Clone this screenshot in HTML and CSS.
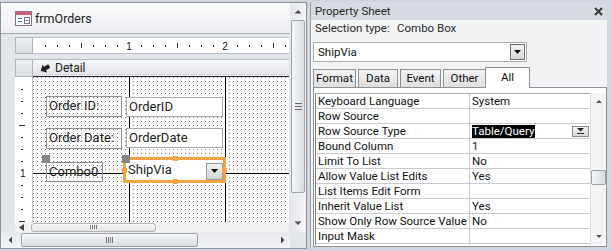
FILE: index.html
```html
<!DOCTYPE html>
<html lang="en">
<head>
    <meta charset="UTF-8">
    <meta name="viewport" content="width=device-width, initial-scale=1.0">
    <title>frmOrders - Design View</title>
    <link rel="stylesheet" href="styles.css">
</head>
<body>
<div class="screen">

    <!-- form design window -->
    <div class="designer">
        <div class="dz-main">
            <div class="dz-title">
                <svg class="form-icon" width="17" height="15" viewBox="0 0 17 15">
                    <rect x="0.5" y="0.5" width="16" height="14" fill="#fbf8f9" stroke="#8c7482"/>
                    <rect x="1" y="1" width="15" height="3" fill="#d65a7c"/>
                    <path d="M3 7.5h4M3 10.5h4" stroke="#3f6fb2" stroke-width="1.2"/>
                    <rect x="9.5" y="6.5" width="5" height="6" fill="#fff" stroke="#6f7b8d"/>
                    <path d="M10.5 9.5h3" stroke="#6f7b8d"/>
                </svg>
                <span>frmOrders</span>
            </div>

            <div class="dz-frame">
                <div class="dz-row ruler-row">
                    <div class="corner"></div>
                    <div class="hruler">
                        <svg width="256" height="15" viewBox="0 0 256 15">
                            <g fill="#333">
                                <rect x="12" y="7" width="1" height="2"/><rect x="24" y="7" width="1" height="2"/>
                                <rect x="36" y="7" width="1" height="2"/><rect x="48" y="5" width="1" height="5"/>
                                <rect x="60" y="7" width="1" height="2"/><rect x="72" y="7" width="1" height="2"/>
                                <rect x="84" y="7" width="1" height="2"/>
                                <rect x="108" y="7" width="1" height="2"/><rect x="120" y="7" width="1" height="2"/>
                                <rect x="132" y="7" width="1" height="2"/><rect x="144" y="5" width="1" height="5"/>
                                <rect x="156" y="7" width="1" height="2"/><rect x="168" y="7" width="1" height="2"/>
                                <rect x="180" y="7" width="1" height="2"/>
                                <rect x="204" y="7" width="1" height="2"/><rect x="216" y="7" width="1" height="2"/>
                                <rect x="228" y="7" width="1" height="2"/><rect x="240" y="5" width="1" height="5"/>
                                <rect x="252" y="7" width="1" height="2"/>
                            </g>
                            <text x="96" y="12" class="ruler-num">1</text>
                            <text x="192" y="12" class="ruler-num">2</text>
                        </svg>
                    </div>
                </div>

                <div class="dz-row section-row">
                    <div class="corner"></div>
                    <div class="section-bar">
                        <svg width="10" height="9" viewBox="0 0 10 9">
                            <path d="M0 4.5 5 0v2.5h5v4H5V9z" fill="#222" transform="rotate(-30 5 4.5)"/>
                        </svg>
                        <span>Detail</span>
                    </div>
                </div>

                <div class="dz-row grid-row">
                    <div class="vruler">
                        <svg width="18" height="145" viewBox="0 0 18 145">
                            <g fill="#333">
                                <rect x="6" y="12" width="2" height="1"/><rect x="6" y="24" width="2" height="1"/>
                                <rect x="6" y="36" width="2" height="1"/><rect x="4" y="48" width="6" height="1"/>
                                <rect x="6" y="60" width="2" height="1"/><rect x="6" y="72" width="2" height="1"/>
                                <rect x="6" y="84" width="2" height="1"/>
                                <rect x="6" y="108" width="2" height="1"/><rect x="6" y="120" width="2" height="1"/>
                                <rect x="6" y="132" width="2" height="1"/><rect x="4" y="144" width="6" height="1"/>
                            </g>
                            <text x="5" y="100" class="ruler-num">1</text>
                        </svg>
                    </div>
                    <div class="canvas">
                        <div class="inch-v" style="left:96px"></div>
                        <div class="inch-v" style="left:192px"></div>
                        <div class="inch-h" style="top:96px"></div>

                        <div class="ctl lbl" style="left:13px;top:19px;width:76px;height:21px">Order ID:</div>
                        <div class="ctl txt" style="left:93px;top:20px;width:97px;height:20px">OrderID</div>

                        <div class="ctl lbl" style="left:13px;top:51px;width:76px;height:21px">Order Date:</div>
                        <div class="ctl txt" style="left:93px;top:51px;width:97px;height:20px">OrderDate</div>

                        <div class="ctl lbl" style="left:13px;top:85px;width:57px;height:20px">Combo0</div>
                        <div class="ctl selected" style="left:90px;top:80px;width:103px;height:26px">
                            <div class="combo">
                                <span>ShipVia</span>
                                <span class="combo-btn">
                                    <svg width="8" height="5" viewBox="0 0 8 5"><path d="M0 0h7L3.5 4z" fill="#111"/></svg>
                                </span>
                            </div>
                            <i class="hdl hdl-tm"></i><i class="hdl hdl-bm"></i>
                            <i class="hdl hdl-ml"></i><i class="hdl hdl-mr"></i>
                        </div>
                        <i class="ctl move" style="left:9px;top:78px"></i>
                        <i class="ctl move" style="left:89px;top:78px"></i>
                    </div>
                </div>

                <div class="dz-row inner-row">
                    <div class="inner-scroll">
                        <svg width="6" height="7" viewBox="0 0 6 7"><path d="M5 0v7L0 3.5z" fill="#444"/></svg>
                        <div class="inner-thumb"><span class="grip-v"></span></div>
                    </div>
                </div>
            </div>
        </div>

        <div class="vscroll">
            <svg width="16" height="17" viewBox="0 0 16 17"><path d="M4.5 10.5 8 7l3.5 3.5z" fill="#4a4a4a"/></svg>
            <div class="vthumb"><span class="grip-h"></span></div>
            <div class="sb-fill"></div>
            <svg width="16" height="17" viewBox="0 0 16 17"><path d="M4.5 6.5 8 10l3.5-3.5z" fill="#4a4a4a"/></svg>
        </div>

        <div class="hscroll">
            <svg width="18" height="16" viewBox="0 0 18 16"><path d="M11 4.5 7.5 8l3.5 3.5z" fill="#4a4a4a"/></svg>
            <div class="hthumb"><span class="grip-v"></span></div>
            <div class="sb-fill"></div>
            <svg width="16" height="16" viewBox="0 0 16 16"><path d="M7 4.5 10.5 8 7 11.5z" fill="#4a4a4a"/></svg>
        </div>
        <div class="sizer"></div>
    </div>

    <!-- property sheet -->
    <div class="props">
        <div class="ps">
            <div class="ps-head">
                <span>Property Sheet</span>
                <svg width="9" height="9" viewBox="0 0 9 9"><path d="M1 1l7 7M8 1 1 8" stroke="#3a3a3a" stroke-width="2"/></svg>
            </div>
            <div class="ps-type"><span class="ps-type-label">Selection type:</span><span>Combo Box</span></div>
            <div class="ps-select">
                <span>ShipVia</span>
                <span class="drop-btn">
                    <svg width="8" height="5" viewBox="0 0 8 5"><path d="M0 0h7L3.5 4z" fill="#111"/></svg>
                </span>
            </div>
            <div class="ps-tabs">
                <div class="tab t-format">Format</div>
                <div class="tab t-data">Data</div>
                <div class="tab t-event">Event</div>
                <div class="tab t-other">Other</div>
                <div class="tab t-all active">All</div>
            </div>
            <div class="ps-panel">
                <div class="pgrid">
                    <div class="prows">
                        <div class="prow"><div class="pname">Keyboard Language</div><div class="pval">System</div></div>
                        <div class="prow"><div class="pname">Row Source</div><div class="pval"></div></div>
                        <div class="prow"><div class="pname">Row Source Type</div>
                            <div class="pval"><span class="hilite">Table/Query</span>
                                <span class="cell-btn"><svg width="7" height="6" viewBox="0 0 7 6"><path d="M0 0h7L3.5 3.5z M0 5h7v1H0z" fill="#222"/></svg></span>
                            </div>
                        </div>
                        <div class="prow"><div class="pname">Bound Column</div><div class="pval">1</div></div>
                        <div class="prow"><div class="pname">Limit To List</div><div class="pval">No</div></div>
                        <div class="prow"><div class="pname">Allow Value List Edits</div><div class="pval">Yes</div></div>
                        <div class="prow"><div class="pname">List Items Edit Form</div><div class="pval"></div></div>
                        <div class="prow"><div class="pname">Inherit Value List</div><div class="pval">Yes</div></div>
                        <div class="prow"><div class="pname">Show Only Row Source Value</div><div class="pval">No</div></div>
                        <div class="prow"><div class="pname">Input Mask</div><div class="pval"></div></div>
                    </div>
                    <div class="pscroll">
                        <svg width="16" height="17" viewBox="0 0 16 17"><path d="M5 10 8 7l3 3z" fill="#555"/></svg>
                        <div class="pthumb"></div>
                        <div class="sb-fill"></div>
                        <svg width="16" height="17" viewBox="0 0 16 17"><path d="M5 7l3 3 3-3z" fill="#555"/></svg>
                    </div>
                </div>
            </div>
        </div>
    </div>
</div>
</body>
</html>
```

FILE: styles.css
```css
/* ---- base ---- */
* { box-sizing: border-box; }
body {
    margin: 0;
    width: 612px;
    height: 251px;
    overflow: hidden;
    background: #d2d6dc;
    font-family: Roboto, "Noto Sans", sans-serif;
    color: #1e1e1e;
}
.screen { display: flex; height: 251px; }
.sb-fill { flex: 1; }

/* ---- form design window ---- */
.designer {
    margin-top: 2px;
    width: 307px;
    height: 247px;
    border: 1px solid #8d939b;
    background: #e2e5e9;
    display: grid;
    grid-template-columns: 289px 16px;
    grid-template-rows: 229px 16px;
}
.dz-title {
    height: 30px;
    display: flex;
    align-items: center;
    gap: 3px;
    padding-left: 14px;
    background: linear-gradient(#f9fafb, #edeff2);
    font-size: 12.5px;
    color: #222;
}
.dz-frame {
    height: 199px;
    border-top: 1px solid #a8adb4;
    padding: 3px 1px 0 14px;
    display: flex;
    flex-direction: column;
}
.dz-row { display: flex; }
.ruler-row { height: 17px; margin-bottom: 5px; }
.section-row { height: 18px; }
.grid-row { height: 145px; }
.inner-row { height: 10px; }

.corner {
    width: 18px;
    background: linear-gradient(#eceef1, #d9dce1);
    border: 1px solid #b0b5bc;
}
.hruler {
    width: 256px;
    background: #fff;
    border-top: 1px solid #b9bdc3;
    border-bottom: 1px solid #b9bdc3;
}
.hruler svg, .vruler svg { display: block; }
.ruler-num { font: 10px "Liberation Sans", sans-serif; fill: #111; text-anchor: middle; }
.vruler .ruler-num { text-anchor: start; }

.section-bar {
    width: 256px;
    display: flex;
    align-items: center;
    gap: 5px;
    padding-left: 7px;
    background: linear-gradient(#f4f5f7, #dfe2e6);
    border-top: 1px solid #b4b9c0;
    border-bottom: 1px solid #2b2b2b;
    font-size: 12px;
    color: #222;
}

.vruler {
    width: 18px;
    background: #fff;
    border-right: 1px solid #c4c8cd;
}
.canvas {
    position: relative;
    width: 256px;
    background-color: #fff;
    background-image: conic-gradient(from 270deg at 1px 1px, #777 90deg, transparent 0);
    background-size: 4px 4px;
    font-size: 13px;
    color: #222;
}
.inch-v { position: absolute; top: 0; bottom: 0; width: 1px; background: #111; }
.inch-h { position: absolute; left: 0; right: 0; height: 1px; background: #111; }

.ctl { position: absolute; }
.lbl {
    border: 1px solid #8f8f8f;
    padding-left: 2px;
    line-height: 18px;
    white-space: nowrap;
}
.txt {
    background: #fff;
    border: 1px solid #a8a8a8;
    padding-left: 2px;
    line-height: 18px;
}
.selected {
    border: 3px solid #f5a443;
}
.combo {
    height: 100%;
    background: #fff;
    display: flex;
    align-items: center;
    justify-content: space-between;
    padding-left: 2px;
    line-height: 18px;
}
.combo-btn {
    width: 17px;
    height: 17px;
    margin-top: 3px;
    display: flex;
    align-items: center;
    justify-content: center;
    background: linear-gradient(#f2f2f2, #d4d4d4);
    border: 1px solid #9a9a9a;
}
.hdl { position: absolute; width: 5px; height: 5px; background: #f5a443; }
.hdl-tm { top: -4px; left: 47px; }
.hdl-bm { bottom: -4px; left: 47px; }
.hdl-ml { left: -4px; top: 8px; }
.hdl-mr { right: -4px; top: 8px; }
.move { width: 8px; height: 8px; background: #858585; }

.inner-scroll {
    width: 274px;
    display: flex;
    align-items: center;
    gap: 6px;
    padding-left: 4px;
    background: #f0f1f3;
}
.inner-thumb {
    width: 125px;
    height: 9px;
    display: flex;
    align-items: center;
    justify-content: center;
    background: linear-gradient(#f8f8f8, #e2e2e2);
    border: 1px solid #b5b5b5;
    border-radius: 3px;
}
.grip-v {
    width: 7px;
    height: 4px;
    background: repeating-linear-gradient(90deg, #7a7a7a 0 1px, transparent 1px 2px);
}
.grip-h {
    width: 7px;
    height: 7px;
    background: repeating-linear-gradient(#6e6e6e 0 1px, transparent 1px 3px);
}

.vscroll {
    grid-row: 1;
    grid-column: 2;
    display: flex;
    flex-direction: column;
    align-items: center;
    background: linear-gradient(90deg, #e6e8eb, #f3f4f6);
}
.vthumb {
    width: 14px;
    height: 173px;
    display: flex;
    align-items: center;
    justify-content: center;
    background: linear-gradient(90deg, #f4f5f6, #d9dce0);
    border: 1px solid #9ea3aa;
    border-radius: 2px;
}
.hscroll {
    grid-row: 2;
    grid-column: 1;
    display: flex;
    align-items: center;
    background: linear-gradient(#e6e8eb, #f3f4f6);
}
.hthumb {
    width: 177px;
    height: 14px;
    margin-left: 2px;
    display: flex;
    align-items: center;
    justify-content: center;
    background: linear-gradient(#f4f5f6, #d9dce0);
    border: 1px solid #9ea3aa;
    border-radius: 2px;
}
.hthumb .grip-v { height: 6px; }
.sizer { background: #e2e5e9; }

/* ---- property sheet ---- */
.props {
    width: 305px;
    height: 251px;
    padding: 2px 5px 4px 3px;
    background: #d2d6dc;
}
.ps {
    height: 100%;
    border-left: 1px solid #9ba1a9;
    background: #f2f3f4;
    font-size: 11.5px;
    color: #111;
}
.ps-head {
    height: 18px;
    display: flex;
    align-items: center;
    justify-content: space-between;
    padding: 0 4px;
    background: #d6dbe1;
    font-size: 11.5px;
    color: #2a2a2a;
}
.ps-type {
    height: 16px;
    line-height: 16px;
    padding-left: 4px;
    white-space: nowrap;
    color: #2a2a2a;
}
.ps-type-label { display: inline-block; width: 82px; }
.ps-select {
    width: 214px;
    height: 20px;
    margin: 6px 0 0 2px;
    display: flex;
    align-items: center;
    justify-content: space-between;
    padding: 0 1px 0 4px;
    background: #fff;
    border: 1px solid #a9abb0;
}
.drop-btn {
    width: 15px;
    height: 16px;
    display: flex;
    align-items: center;
    justify-content: center;
    background: linear-gradient(#f4f4f4, #d6d6d6);
    border: 1px solid #6f6f6f;
}
.ps-tabs {
    height: 20px;
    margin: 5px 0 0 2px;
    display: flex;
    align-items: flex-end;
    position: relative;
    z-index: 1;
}
.tab {
    height: 18px;
    line-height: 17px;
    text-align: center;
    background: linear-gradient(#f3f3f3, #dedede);
    border: 1px solid #8e9196;
    border-bottom: none;
}
.t-format { width: 43px; }
.t-data { width: 40px; margin-left: 2px; }
.t-event { width: 41px; margin-left: 2px; }
.t-other { width: 43px; margin-left: 2px; }
.tab.active {
    width: 45px;
    height: 21px;
    margin-left: -1px;
    margin-bottom: -1px;
    background: #fff;
    line-height: 18px;
}
.ps-panel {
    width: 294px;
    height: 160px;
    margin-left: 2px;
    padding: 5px 0 1px 1px;
    background: #fff;
    border: 1px solid #8e9196;
}
.pgrid { display: flex; height: 152px; }
.prows {
    flex: 1;
    border-left: 1px solid #7f848c;
    border-top: 1px solid #a5a8ad;
}
.prow {
    height: 15px;
    display: flex;
    border-bottom: 1px solid #c9cbce;
    line-height: 15px;
}
.pname {
    width: 154px;
    padding-left: 2px;
    border-right: 1px solid #c9cbce;
    white-space: nowrap;
    overflow: hidden;
}
.pval {
    flex: 1;
    display: flex;
    align-items: center;
    justify-content: space-between;
    padding: 0 1px 0 2px;
}
.hilite { background: #000; color: #fff; padding-right: 1px; line-height: 13px; }
.cell-btn {
    width: 17px;
    height: 11px;
    display: flex;
    align-items: center;
    justify-content: center;
    background: linear-gradient(#f4f4f4, #d8d8d8);
    border: 1px solid #8c8c8c;
}
.pscroll {
    width: 16px;
    display: flex;
    flex-direction: column;
    align-items: center;
    background: #f4f4f5;
    border-left: 1px solid #dcdde0;
}
.pthumb {
    width: 15px;
    height: 15px;
    margin-top: 60px;
    background: linear-gradient(90deg, #f4f5f6, #d7dade);
    border: 1px solid #9ea3aa;
    border-radius: 2px;
}
```
